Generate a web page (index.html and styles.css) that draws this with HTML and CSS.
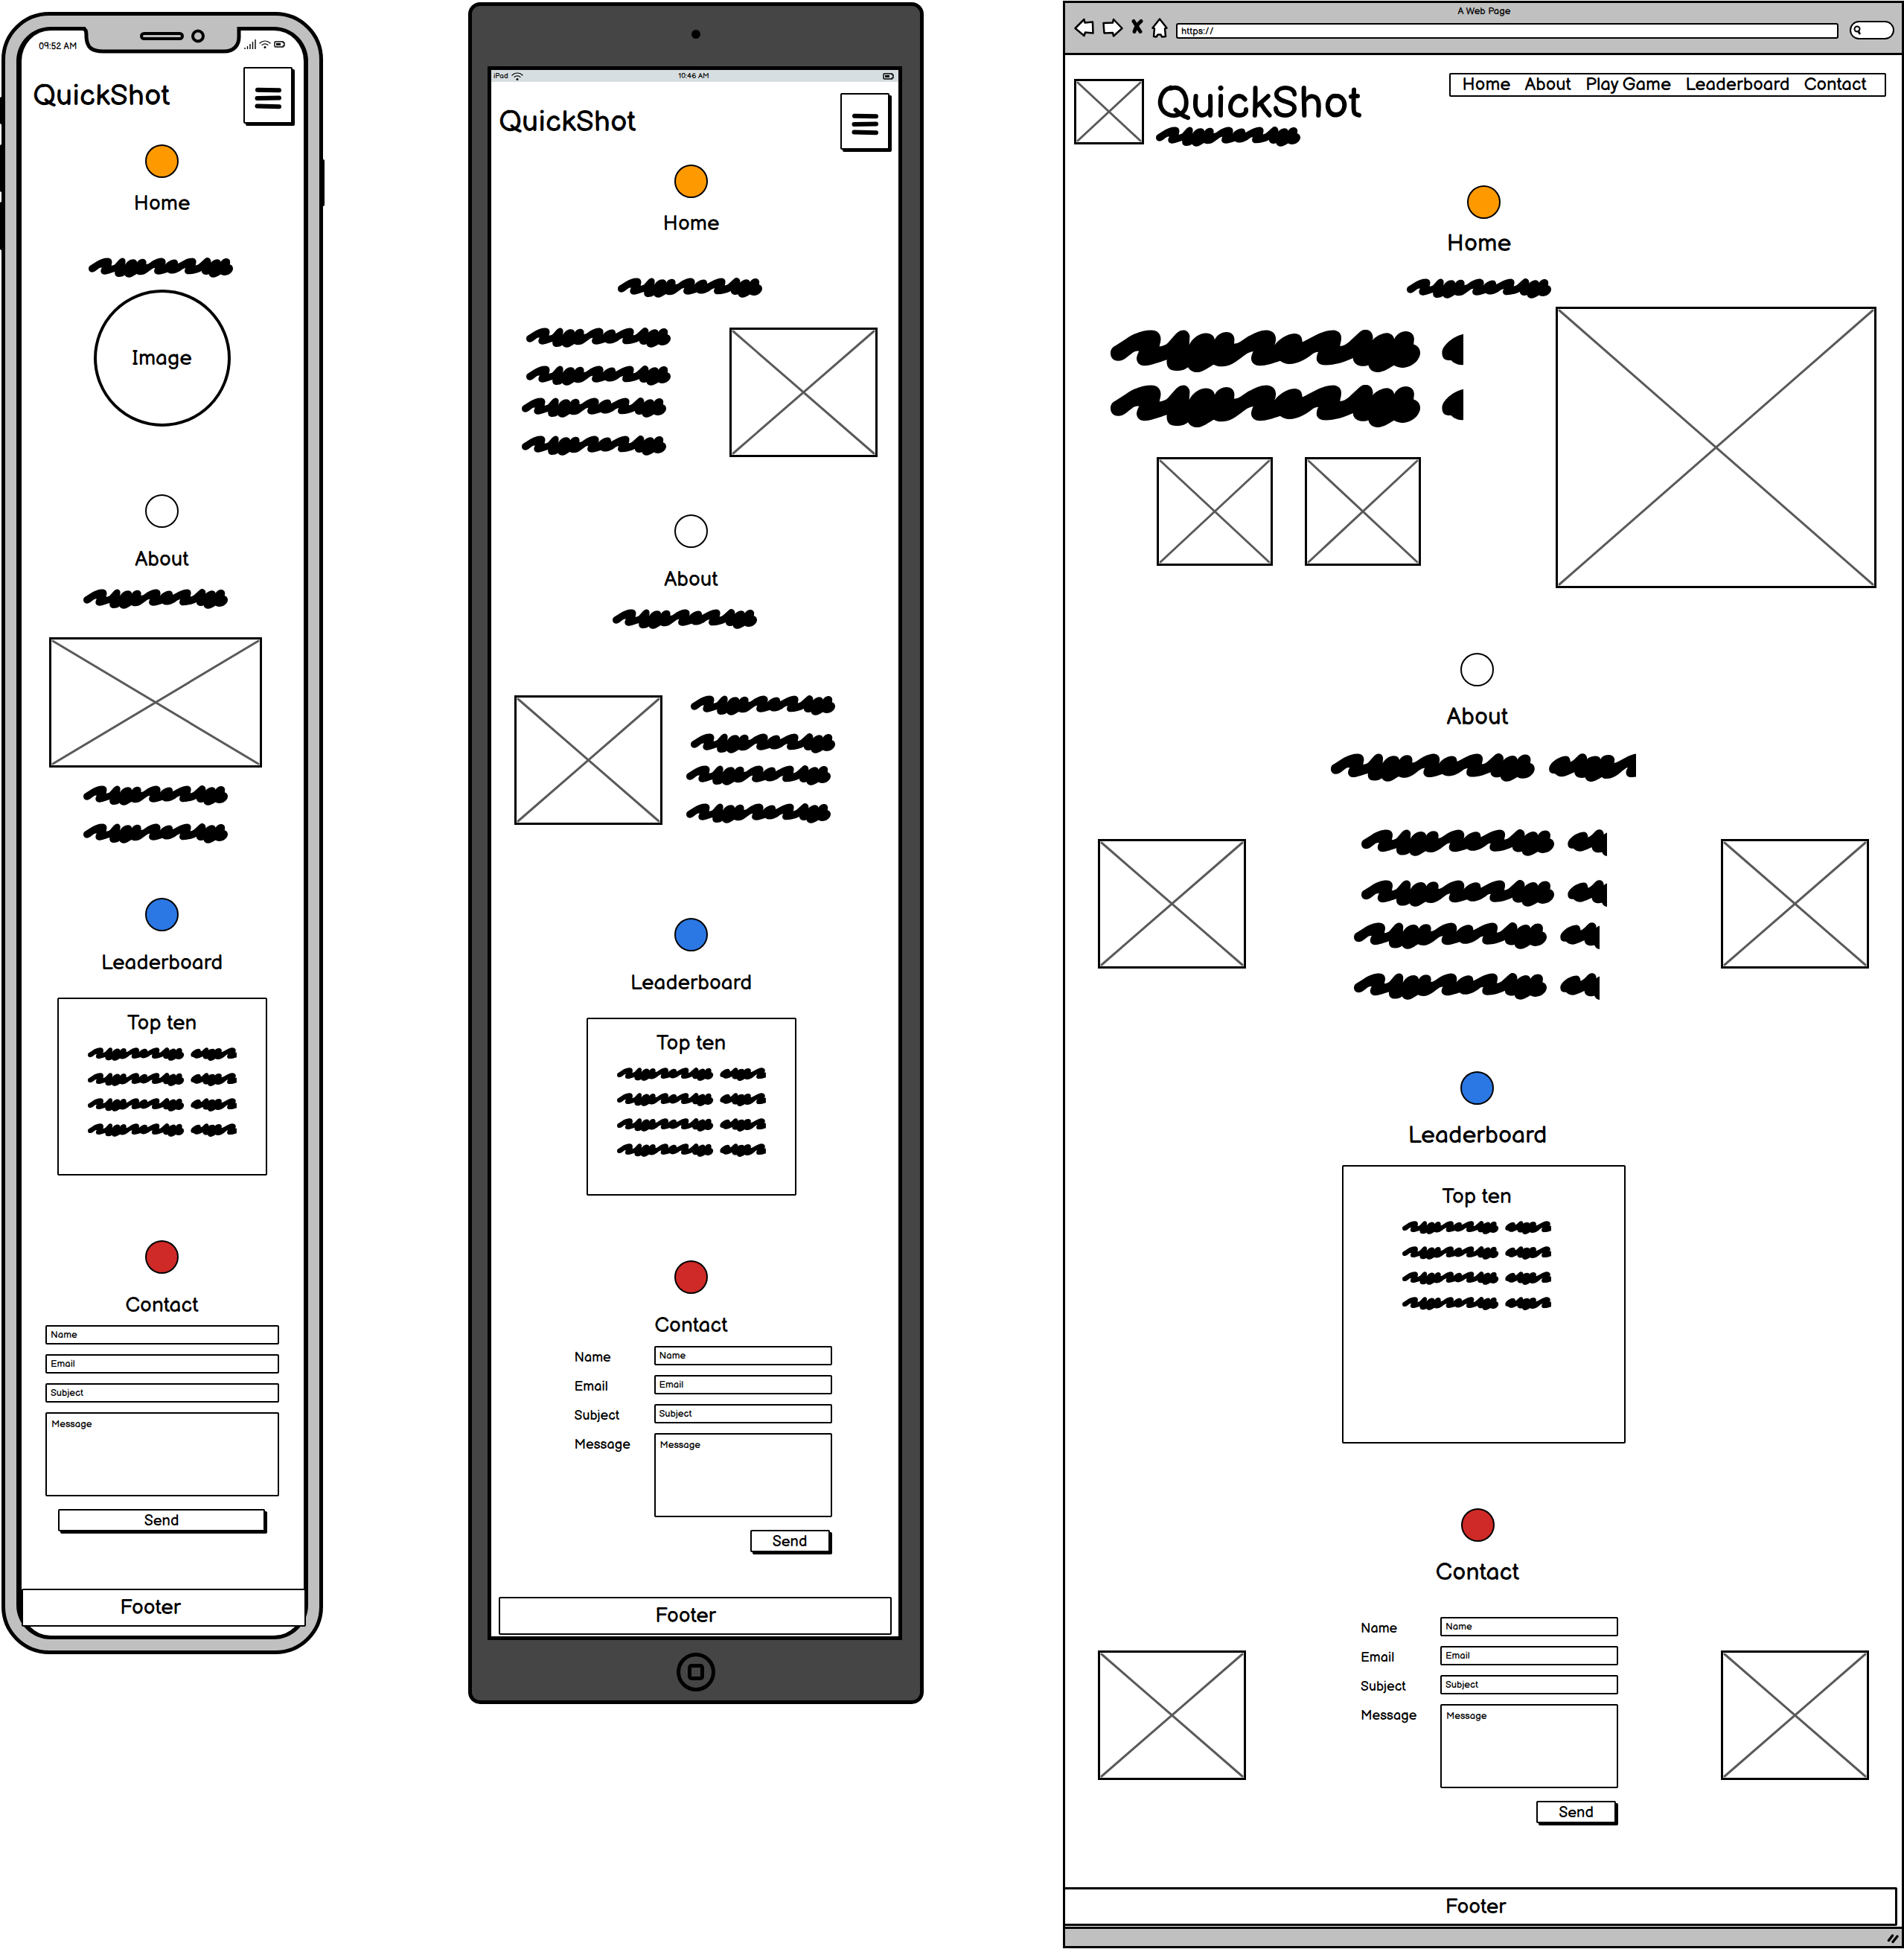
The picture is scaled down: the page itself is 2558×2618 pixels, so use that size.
FILE: index.html
```html
<!DOCTYPE html>
<html lang="en">
<head>
<meta charset="utf-8">
<meta name="viewport" content="width=device-width, initial-scale=1">
<title>QuickShot wireframes</title>
<link rel="stylesheet" href="styles.css">
</head>
<body>

<svg class="defs" aria-hidden="true">
  <defs>
    <g id="scribble">
      <path transform="scale(.35714 .38265) translate(-202 -1158)" d="M202 1240C202 1225 212 1217 222 1213L260 1190C290 1170 325 1159 355 1159C378 1159 392 1172 391 1192C390 1203 387 1210 386 1217C400 1215 410 1212 418 1204L447 1173C460 1160 470 1159 478 1159C492 1160 500 1172 500 1183L498 1211C508 1190 535 1170 562 1170C580 1170 592 1180 594 1193C600 1178 620 1166 638 1166C658 1166 668 1178 668 1192L667 1207C678 1206 685 1203 690 1200L720 1181C745 1168 770 1159 788 1159C810 1159 824 1172 824 1190C824 1200 821 1206 819 1212C832 1194 865 1171 894 1171C912 1171 922 1182 922 1192L924 1201L975 1176C1000 1164 1025 1159 1040 1159C1060 1160 1071 1172 1070 1187C1070 1200 1066 1207 1065 1215C1080 1215 1095 1205 1105 1195L1140 1165C1152 1156 1162 1157 1168 1158C1183 1162 1190 1175 1189 1188L1187 1195C1200 1180 1225 1169 1242 1169C1258 1170 1268 1180 1269 1191C1275 1175 1295 1163 1313 1163C1335 1163 1345 1178 1344 1192L1342 1209C1358 1213 1367 1225 1367 1240C1365 1265 1335 1291 1298 1291C1285 1291 1275 1287 1268 1283C1245 1297 1225 1307 1208 1307C1190 1307 1175 1298 1172 1282C1150 1290 1115 1284 1114 1257C1085 1270 1045 1282 1010 1282C990 1282 977 1273 977 1260C977 1250 980 1242 984 1236C975 1236 965 1240 960 1244C940 1260 905 1278 875 1278C860 1278 850 1274 840 1267C815 1275 785 1284 765 1284C742 1284 731 1272 731 1258C732 1247 736 1240 739 1234C725 1236 718 1240 710 1245C690 1257 660 1287 622 1287C608 1287 598 1284 590 1280C570 1290 550 1306 530 1307C510 1307 500 1299 493 1289C480 1300 462 1302 448 1302C425 1302 410 1290 414 1263C390 1270 350 1284 330 1284C310 1284 300 1272 300 1258C301 1247 306 1240 309 1233C298 1231 290 1235 283 1240C268 1249 253 1267 231 1267C212 1267 202 1255 202 1240Z"/>
      <path transform="scale(.5073) translate(-73 -97)" d="M951 158C951 135 990 108 1018 107C1030 107 1036 115 1037 130C1047 128 1060 113 1068 105C1076 97 1082 97 1088 97C1098 98 1105 108 1104 120C1110 112 1125 107 1138 107C1150 107 1156 112 1158 120C1163 108 1175 102 1192 102C1207 102 1214 112 1215 122L1213 135C1225 132 1240 124 1250 118C1270 107 1290 99 1302 98C1320 97 1335 108 1335 122L1331 141L1342 138V180C1320 188 1300 192 1285 192C1275 193 1266 190 1263 183C1257 172 1264 160 1268 153C1250 155 1225 198 1182 198C1172 198 1168 195 1163 191C1150 200 1132 210 1118 210C1108 210 1100 204 1096 193C1080 198 1055 195 1053 172C1035 180 1015 190 1003 190C990 190 982 185 975 178C965 178 951 178 951 158Z"/>
    </g>
    <g id="cross">
      <line x1="0" y1="0" x2="100%" y2="100%"/>
      <line x1="100%" y1="0" x2="0" y2="100%"/>
    </g>
    <g id="bars">
      <path d="M4 4.700L33 5.300M3.500 16L33 15.600M3.500 26.600L33 27.200"/>
    </g>
    <g id="wifi">
      <path d="M1 5C5 1 11 1 15 5M4 7.500C6.500 5.500 9.500 5.500 12 7.500" fill="none" stroke="#000" stroke-width="1.200" stroke-linecap="round"/>
      <circle cx="8" cy="10.500" r="1.500"/>
    </g>
    <g id="battery">
      <path d="M2 1H12.500V2.500H14V6.500H12.500V8H2Q1 8 1 7V2Q1 1 2 1Z" fill="none" stroke="#000" stroke-width="1.400"/>
      <rect x="3" y="3" width="6" height="3"/>
    </g>
  </defs>
</svg>

<div class="board">

  <!-- Phone -->
  <div class="phone">
    <span class="side-key side-key--mute"></span>
    <span class="side-key side-key--up"></span>
    <span class="side-key side-key--down"></span>
    <span class="side-key side-key--power"></span>
    <div class="phone-screen">
      <svg class="notch" viewBox="0 0 216 38" aria-hidden="true">
        <path d="M6 -1V16C7 28 14 33 30 33H192C206 33 212 24 212 14V-1Z" fill="#c0c0c0"/>
        <path d="M1 2.500C7 2.500 7 6 7 14C8 28 14 33 30 33H192C206 33 212 24 212 14V2.500H216" fill="none" stroke="#000" stroke-width="5"/>
        <rect x="81" y="9" width="55" height="7" rx="3.500" fill="none" stroke="#000" stroke-width="4"/>
        <circle cx="157" cy="12.500" r="7" fill="none" stroke="#000" stroke-width="4"/>
      </svg>
      <div class="phone-status">
        <span>09:52 AM</span>
        <span class="status-icons">
          <svg width="16" height="13" viewBox="0 0 16 13" aria-hidden="true"><path d="M1 13V11M4.500 13V9M8 13V6M11.500 13V3M15 13V0" stroke="#000" stroke-width="1.400"/></svg>
          <svg width="16" height="13" viewBox="0 0 16 13" aria-hidden="true"><use href="#wifi"/></svg>
          <svg width="15" height="9" viewBox="0 0 15 9" aria-hidden="true"><use href="#battery"/></svg>
        </span>
      </div>
      <header class="small-header">
        <h1>QuickShot</h1>
        <button class="menu" type="button" aria-label="Menu"><svg width="37" height="32" viewBox="0 0 37 32"><use href="#bars"/></svg></button>
      </header>
      <section class="section home">
        <span class="dot dot--orange"></span>
        <h2>Home</h2>
        <div class="intro"><svg class="scribble" viewBox="0 0 416 57"><use href="#scribble"/></svg></div>
        <div class="round-image">Image</div>
      </section>
      <section class="section about">
        <span class="dot"></span>
        <h2>About</h2>
        <div class="about-body">
          <svg class="scribble" viewBox="0 0 416 57"><use href="#scribble"/></svg>
          <svg class="picture picture--wide"><use href="#cross"/></svg>
          <svg class="scribble" viewBox="0 0 416 57"><use href="#scribble"/></svg>
          <svg class="scribble" viewBox="0 0 416 57"><use href="#scribble"/></svg>
        </div>
      </section>
      <section class="section leaders">
        <span class="dot dot--blue"></span>
        <h2>Leaderboard</h2>
        <div class="scores">
          <h3>Top ten</h3>
          <svg class="scribble scribble--score" viewBox="0 0 644 57"><use href="#scribble"/></svg>
          <svg class="scribble scribble--score" viewBox="0 0 644 57"><use href="#scribble"/></svg>
          <svg class="scribble scribble--score" viewBox="0 0 644 57"><use href="#scribble"/></svg>
          <svg class="scribble scribble--score" viewBox="0 0 644 57"><use href="#scribble"/></svg>
        </div>
      </section>
      <section class="section contact">
        <span class="dot dot--red"></span>
        <h2>Contact</h2>
        <form class="stacked-form">
          <input type="text" placeholder="Name" aria-label="Name">
          <input type="email" placeholder="Email" aria-label="Email">
          <input type="text" placeholder="Subject" aria-label="Subject">
          <textarea placeholder="Message" aria-label="Message"></textarea>
          <button class="send" type="button">Send</button>
        </form>
      </section>
      <footer class="footer">Footer</footer>
    </div>
  </div>

  <!-- Tablet -->
  <div class="tablet">
    <div class="bezel"><span class="lens"></span></div>
    <div class="tablet-screen">
      <div class="tablet-status">
        <span class="carrier">iPad <svg width="16" height="12" viewBox="0 0 16 12" aria-hidden="true"><use href="#wifi"/></svg></span>
        <span>10:46 AM</span>
        <span class="charge"><svg width="15" height="9" viewBox="0 0 15 9" aria-hidden="true"><use href="#battery"/></svg></span>
      </div>
      <header class="small-header">
        <h1>QuickShot</h1>
        <button class="menu" type="button" aria-label="Menu"><svg width="37" height="32" viewBox="0 0 37 32"><use href="#bars"/></svg></button>
      </header>
      <main class="tablet-main">
        <section class="section home">
          <span class="dot dot--orange"></span>
          <h2>Home</h2>
          <div class="intro"><svg class="scribble" viewBox="0 0 416 57"><use href="#scribble"/></svg></div>
          <div class="split split--home">
            <div class="lines">
              <div class="pair pair--in">
                <svg class="scribble" viewBox="0 0 416 57"><use href="#scribble"/></svg>
                <svg class="scribble" viewBox="0 0 416 57"><use href="#scribble"/></svg>
              </div>
              <div class="pair">
                <svg class="scribble" viewBox="0 0 416 57"><use href="#scribble"/></svg>
                <svg class="scribble" viewBox="0 0 416 57"><use href="#scribble"/></svg>
              </div>
            </div>
            <svg class="picture"><use href="#cross"/></svg>
          </div>
        </section>
        <section class="section about">
          <span class="dot"></span>
          <h2>About</h2>
          <div class="about-body"><svg class="scribble" viewBox="0 0 416 57"><use href="#scribble"/></svg></div>
          <div class="split split--about">
            <svg class="picture"><use href="#cross"/></svg>
            <div class="lines">
              <div class="pair pair--in">
                <svg class="scribble" viewBox="0 0 416 57"><use href="#scribble"/></svg>
                <svg class="scribble" viewBox="0 0 416 57"><use href="#scribble"/></svg>
              </div>
              <div class="pair">
                <svg class="scribble" viewBox="0 0 416 57"><use href="#scribble"/></svg>
                <svg class="scribble" viewBox="0 0 416 57"><use href="#scribble"/></svg>
              </div>
            </div>
          </div>
        </section>
        <section class="section leaders">
          <span class="dot dot--blue"></span>
          <h2>Leaderboard</h2>
          <div class="scores">
            <h3>Top ten</h3>
            <svg class="scribble scribble--score" viewBox="0 0 644 57"><use href="#scribble"/></svg>
            <svg class="scribble scribble--score" viewBox="0 0 644 57"><use href="#scribble"/></svg>
            <svg class="scribble scribble--score" viewBox="0 0 644 57"><use href="#scribble"/></svg>
            <svg class="scribble scribble--score" viewBox="0 0 644 57"><use href="#scribble"/></svg>
          </div>
        </section>
        <section class="section contact">
          <span class="dot dot--red"></span>
          <h2>Contact</h2>
          <form class="label-form">
            <label for="t-name">Name</label><input id="t-name" type="text" placeholder="Name">
            <label for="t-email">Email</label><input id="t-email" type="email" placeholder="Email">
            <label for="t-subject">Subject</label><input id="t-subject" type="text" placeholder="Subject">
            <label for="t-message">Message</label><textarea id="t-message" placeholder="Message"></textarea>
            <button class="send" type="button">Send</button>
          </form>
        </section>
      </main>
      <footer class="footer">Footer</footer>
    </div>
    <div class="bezel"><span class="home-key"></span></div>
  </div>

  <!-- Desktop browser -->
  <div class="browser">
    <div class="chrome">
      <div class="window-title">A Web Page</div>
      <div class="toolbar">
        <button type="button" aria-label="Back"><svg width="27" height="26" viewBox="0 0 27 26"><path class="tool-shape" d="M1.500 14L13.500 2L14.500 6.500L25 5.500L25.500 20.500L15 19.500L13.500 24Z"/></svg></button>
        <button type="button" aria-label="Forward"><svg width="28" height="26" viewBox="0 0 28 26"><path class="tool-shape" d="M1.500 7L14 6.500L15 2L26.500 14L15 24.500L14 20L2.500 20.500Z"/></svg></button>
        <button type="button" aria-label="Stop"><svg width="16" height="26" viewBox="0 0 16 26"><path d="M3 4.500L12 18.500M13 4.500Q7 9 4 18.500" fill="none" stroke="#000" stroke-width="5" stroke-linecap="round"/></svg></button>
        <button type="button" aria-label="Home page"><svg width="22" height="27" viewBox="0 0 22 27"><path class="tool-shape" d="M11 1.500L20.500 13.500L18 14.500L19 25L14 25.500L12.500 22.500H8.500L6.500 25.500L3 25L4 14.500L1.500 13.500Z"/></svg></button>
        <input class="url" type="text" value="https://" aria-label="Address">
        <div class="search">
          <svg width="11" height="14" viewBox="0 0 11 14" aria-hidden="true"><circle cx="5" cy="5" r="3.500" fill="none" stroke="#000" stroke-width="2"/><path d="M6 7L9 12" stroke="#000" stroke-width="2.500"/></svg>
          <input type="search" aria-label="Search">
        </div>
      </div>
    </div>
    <div class="page">
      <header class="site-header">
        <svg class="picture picture--logo"><use href="#cross"/></svg>
        <div class="brand">
          <h1>QuickShot</h1>
          <svg class="scribble" viewBox="0 0 416 57"><use href="#scribble"/></svg>
        </div>
        <nav class="site-nav">
          <a href="#home">Home</a>
          <a href="#about">About</a>
          <a href="#play">Play Game</a>
          <a href="#leaderboard">Leaderboard</a>
          <a href="#contact">Contact</a>
        </nav>
      </header>
      <section class="section home" id="home">
        <span class="dot dot--orange"></span>
        <div class="section-head">
          <h2>Home</h2>
          <svg class="scribble" viewBox="0 0 416 57"><use href="#scribble"/></svg>
        </div>
        <div class="hero">
          <div class="hero-text">
            <svg class="scribble scribble--big" viewBox="0 0 474 57"><use href="#scribble"/></svg>
            <svg class="scribble scribble--big" viewBox="0 0 474 57"><use href="#scribble"/></svg>
            <div class="thumbs">
              <svg class="picture picture--thumb"><use href="#cross"/></svg>
              <svg class="picture picture--thumb"><use href="#cross"/></svg>
            </div>
          </div>
          <svg class="picture picture--hero"><use href="#cross"/></svg>
        </div>
      </section>
      <section class="section about" id="about">
        <div class="section-head">
          <span class="dot"></span>
          <h2>About</h2>
        </div>
        <svg class="scribble scribble--lead" viewBox="0 0 623 57"><use href="#scribble"/></svg>
        <div class="flank flank--about">
          <svg class="picture"><use href="#cross"/></svg>
          <div class="lines">
            <div class="pair pair--in">
              <svg class="scribble scribble--body" viewBox="0 0 530 57"><use href="#scribble"/></svg>
              <svg class="scribble scribble--body" viewBox="0 0 530 57"><use href="#scribble"/></svg>
            </div>
            <div class="pair">
              <svg class="scribble scribble--body" viewBox="0 0 530 57"><use href="#scribble"/></svg>
              <svg class="scribble scribble--body" viewBox="0 0 530 57"><use href="#scribble"/></svg>
            </div>
          </div>
          <svg class="picture"><use href="#cross"/></svg>
        </div>
      </section>
      <section class="section leaders" id="leaderboard">
        <div class="section-head">
          <span class="dot dot--blue"></span>
          <h2>Leaderboard</h2>
        </div>
        <div class="scores">
          <h3>Top ten</h3>
          <svg class="scribble scribble--score" viewBox="0 0 644 57"><use href="#scribble"/></svg>
          <svg class="scribble scribble--score" viewBox="0 0 644 57"><use href="#scribble"/></svg>
          <svg class="scribble scribble--score" viewBox="0 0 644 57"><use href="#scribble"/></svg>
          <svg class="scribble scribble--score" viewBox="0 0 644 57"><use href="#scribble"/></svg>
        </div>
      </section>
      <section class="section contact" id="contact">
        <div class="section-head">
          <span class="dot dot--red"></span>
          <h2>Contact</h2>
        </div>
        <div class="flank flank--contact">
          <svg class="picture"><use href="#cross"/></svg>
          <form class="label-form">
            <label for="d-name">Name</label><input id="d-name" type="text" placeholder="Name">
            <label for="d-email">Email</label><input id="d-email" type="email" placeholder="Email">
            <label for="d-subject">Subject</label><input id="d-subject" type="text" placeholder="Subject">
            <label for="d-message">Message</label><textarea id="d-message" placeholder="Message"></textarea>
            <button class="send" type="button">Send</button>
          </form>
          <svg class="picture"><use href="#cross"/></svg>
        </div>
      </section>
      <footer class="footer">Footer</footer>
    </div>
    <div class="window-foot">
      <svg width="16" height="14" viewBox="0 0 16 14" aria-hidden="true"><path d="M2.500 9.500L7.500 3M8 11.500L14 4" stroke="#000" stroke-width="3.500" stroke-linecap="round"/></svg>
    </div>
  </div>

</div>
</body>
</html>
```
FILE: styles.css
```css
*, *::before, *::after { box-sizing: border-box; }

body {
  margin: 0;
  background: #fff;
  color: #000;
  font-family: "Balsamiq Sans", Lato, sans-serif;
  font-size: 28px;
}

h1, h2, h3 { margin: 0; font-weight: 400; }
h1 { font-size: 40px; line-height: 78px; }
h2 { font-size: 28px; line-height: 40px; }
h3 { font-size: 28px; line-height: 32px; }
svg { display: block; flex: none; }
button, input, textarea { font: inherit; color: inherit; margin: 0; }
button { padding: 0; cursor: pointer; }

.defs { position: absolute; width: 0; height: 0; }

.board {
  display: grid;
  grid-template-columns: 435fr 194fr 612fr 187fr 1130fr;
  align-items: start;
}

/* Shared pieces */
.section { display: flex; flex-direction: column; align-items: center; }

.dot {
  width: 45px;
  height: 45px;
  border: 2px solid #000;
  border-radius: 50%;
  background: #fff;
}
.dot--orange { background: #ff9900; }
.dot--blue { background: #2b78e4; }
.dot--red { background: #cf2a27; }

.scribble { width: 194px; height: 27px; }
.scribble--score { width: 200px; height: 18px; }
.scribble--big { width: 474px; height: 57px; }
.scribble--lead { width: 410px; height: 38px; }
.scribble--body { width: 330px; height: 36px; }

.picture {
  width: 199px;
  height: 174px;
  padding: 2px;
  border: 3px solid #000;
  overflow: visible;
  stroke: #5a5a5a;
  stroke-width: 3px;
  stroke-linecap: round;
}

.small-header { display: flex; justify-content: space-between; align-items: flex-start; }
.menu {
  width: 66px;
  height: 76px;
  margin: 0 3px 3px 0;
  padding-top: 7px;
  display: grid;
  place-items: center;
  background: #fff;
  border: 2px solid #000;
  border-radius: 2px;
  box-shadow: 3px 3px 0 #000;
}
.menu svg { stroke: #000; stroke-width: 6px; stroke-linecap: round; }

.intro { margin-top: 52px; padding-right: 4px; }
.about-body {
  display: flex;
  flex-direction: column;
  align-items: center;
  gap: 24px;
  margin-top: 19px;
  padding-right: 18px;
}

.home h2 { margin-top: 15px; }
.about h2, .leaders h2, .contact h2 { margin-top: 23px; }

.lines { display: flex; flex-direction: column; gap: 16px; width: 200px; }
.pair { display: flex; flex-direction: column; gap: 24px; align-self: flex-start; }
.pair--in { align-self: flex-end; }

.scores {
  display: flex;
  flex-direction: column;
  align-items: center;
  gap: 16px;
  width: 282px;
  height: 239px;
  margin-top: 26px;
  padding-top: 17px;
  border: 2px solid #000;
  border-radius: 2px;
}

input, textarea {
  display: block;
  width: 100%;
  height: 26px;
  padding: 0 5px;
  border: 2px solid #000;
  border-radius: 2px;
  background: #fff;
  font-size: 13px;
  line-height: 16px;
}
textarea { height: 113px; padding: 6px; resize: none; }
::placeholder { color: #000; opacity: 1; }

.send {
  height: 30px;
  margin: 4px 3px 3px 0;
  padding-top: 2px;
  border: 2px solid #000;
  border-radius: 2px;
  background: #fff;
  box-shadow: 3px 3px 0 #000;
  font-size: 20px;
  line-height: 24px;
}

.label-form {
  display: grid;
  grid-template-columns: 107px 239px;
  row-gap: 13px;
  font-size: 18px;
}
.label-form label { padding-top: 6px; line-height: 20px; }
.label-form .send { grid-column: 2; justify-self: end; width: 107px; }

.footer {
  display: flex;
  align-items: center;
  justify-content: center;
  height: 51px;
  border: 2px solid #000;
  border-radius: 2px;
  background: #fff;
  line-height: 34px;
}

/* Phone */
.phone {
  grid-column: 1;
  position: relative;
  margin: 16px 1px 0 2px;
  padding: 15px;
  border: 5px solid #000;
  border-radius: 64px;
  background: #c0c0c0;
}
.phone-screen {
  position: relative;
  padding-bottom: 12px;
  border: 6px solid #000;
  border-width: 5px 6px 5px 7px;
  border-radius: 46px;
  background: #fff;
}
.notch { position: absolute; top: -5px; left: 80px; width: 216px; height: 38px; overflow: visible; }
.side-key { position: absolute; left: -7px; width: 5px; background: #000; border-radius: 2px; }
.side-key--mute { top: 109px; height: 37px; }
.side-key--up { top: 173px; height: 64px; }
.side-key--down { top: 250px; height: 65px; }
.side-key--power { left: auto; right: -7px; top: 193px; height: 63px; }

.phone-status {
  display: flex;
  justify-content: space-between;
  height: 49px;
  padding: 12px 25px 0 23px;
  font-size: 12px;
  line-height: 19px;
}
.status-icons { display: flex; align-items: center; gap: 4px; height: 13px; }
.phone .small-header { padding: 0 12px 0 15px; }
.phone .section { padding-right: 2px; }
.phone .home { margin-top: 25px; }
.phone .about { margin-top: 91px; }
.phone .leaders { margin-top: 73px; }
.phone .contact { margin-top: 87px; }
.round-image {
  display: grid;
  place-items: center;
  width: 184px;
  height: 184px;
  margin-top: 16px;
  border: 4px solid #000;
  border-radius: 50%;
}
.picture--wide { width: 286px; height: 175px; margin-top: 14px; }
.stacked-form {
  display: flex;
  flex-direction: column;
  gap: 13px;
  width: 100%;
  margin-top: 6px;
  padding: 0 31px 0 32px;
}
.stacked-form .send { margin: 4px 19px 3px 17px; }
.phone .footer { position: relative; margin: 74px -3px 0 0; padding-right: 36px; }

/* Tablet */
.tablet {
  grid-column: 3;
  margin-top: 3px;
  padding: 0 24px 0 21px;
  border: 5px solid #000;
  border-radius: 16px;
  background: #454545;
}
.bezel { display: grid; place-items: center; height: 81px; padding-left: 3px; }
.lens { width: 12px; height: 12px; margin-bottom: 6px; border-radius: 50%; background: #000; }
.home-key {
  display: grid;
  place-items: center;
  width: 52px;
  height: 52px;
  margin-top: 4px;
  border: 5px solid #000;
  border-radius: 50%;
}
.home-key::before {
  content: "";
  width: 22px;
  height: 22px;
  border: 5px solid #000;
  border-radius: 5px;
}
.tablet-screen { padding-bottom: 2px; border: 5px solid #000; background: #fff; }
.tablet-status {
  display: grid;
  grid-template-columns: 1fr auto 1fr;
  align-items: center;
  height: 16px;
  padding: 0 6px 0 3px;
  background: #d7dee1;
  font-size: 10px;
  line-height: 16px;
}
.carrier { display: flex; align-items: center; gap: 4px; }
.charge { justify-self: end; }
.tablet .small-header { margin-top: 15px; padding: 0 9px 0 10px; }
.tablet-main { padding-right: 10px; }
.tablet .home { margin-top: 17px; }
.tablet .about { margin-top: 77px; }
.tablet .leaders { margin-top: 125px; }
.tablet .contact { margin-top: 87px; }
.split { display: flex; align-self: stretch; }
.split--home { gap: 79px; margin-top: 40px; padding-left: 41px; }
.split--about { gap: 32px; margin-top: 89px; padding-left: 31px; }
.tablet .label-form { margin-top: 7px; padding-left: 32px; box-sizing: content-box; }
.tablet .footer { margin: 57px 9px 0 10px; padding-right: 26px; }

/* Desktop browser */
.browser { grid-column: 5; margin-top: 1px; border: 3px solid #000; background: #fff; }
.chrome { padding: 2px 10px 18px 12px; border-bottom: 3px solid #000; background: #c0c0c0; }
.window-title { font-size: 13px; line-height: 18px; text-align: center; }
.toolbar { display: flex; align-items: flex-start; gap: 11px; }
.toolbar button { border: 0; background: none; }
.tool-shape { fill: #fff; stroke: #000; stroke-width: 2.5px; stroke-linejoin: round; }
.url { flex: 1; height: 21px; margin-top: 7px; border-radius: 3px; }
.search {
  display: flex;
  align-items: center;
  width: 60px;
  height: 25px;
  margin: 4px 0 0 4px;
  padding: 0 8px 0 3px;
  border: 2px solid #000;
  border-radius: 14px;
  background: #fff;
}
.search input { height: 16px; padding: 0; border: 0; background: none; }

.site-header { display: flex; align-items: flex-start; gap: 16px; padding: 24px 21px 0 12px; }
.picture--logo { width: 94px; height: 88px; margin-top: 8px; }
.brand { margin-top: 12px; }
.brand h1 { font-size: 60px; line-height: 60px; }
.site-nav {
  display: flex;
  gap: 19px;
  margin-left: auto;
  padding: 0 24px 0 15px;
  border: 2px solid #000;
  border-radius: 2px;
  font-size: 24px;
  line-height: 28px;
}
.site-nav a { color: inherit; text-decoration: none; }

.section-head { display: flex; flex-direction: column; align-items: center; padding-right: 16px; }
.browser h2 { font-size: 32px; line-height: 46px; margin-top: 19px; }
.browser .home { margin-top: 52px; }
.browser .home h2 { margin: 11px 0 23px; }
.browser .home .section-head { padding-right: 12px; }
.browser .about { margin-top: 87px; }
.browser .leaders { margin-top: 96px; }
.browser .contact { margin-top: 87px; }

.hero {
  display: flex;
  justify-content: space-between;
  align-self: stretch;
  margin-top: 11px;
  padding: 0 34px 0 61px;
}
.hero-text { display: flex; flex-direction: column; gap: 17px; padding-top: 31px; }
.thumbs { display: flex; gap: 43px; margin-top: 23px; padding-left: 62px; }
.picture--thumb { width: 156px; height: 146px; }
.picture--hero { width: 431px; height: 378px; }

.scribble--lead { margin-top: 25px; }
.flank { display: flex; justify-content: space-between; align-items: flex-start; align-self: stretch; padding: 0 44px; }
.flank--about { margin-top: 64px; }
.flank--about .picture { margin-top: 13px; }
.flank .lines { width: 348px; gap: 21px; }
.flank .pair { gap: 32px; }
.flank .pair--in { align-self: flex-start; padding-left: 10px; }

.browser .scores { width: 381px; height: 374px; margin-top: 16px; padding: 25px 18px 0 0; }

.flank--contact { margin-top: 36px; }
.flank--contact .picture { margin-top: 45px; }
.flank--contact .label-form { margin-left: 16px; }

.browser .footer { position: relative; height: 52px; margin: 83px 6px 1px -3px; padding: 2px 12px 0 0; border-width: 3px; }
.window-foot {
  display: flex;
  justify-content: flex-end;
  height: 26px;
  padding: 6px 4px 0 0;
  border-top: 3px solid #000;
  background: #c0c0c0;
}
```
